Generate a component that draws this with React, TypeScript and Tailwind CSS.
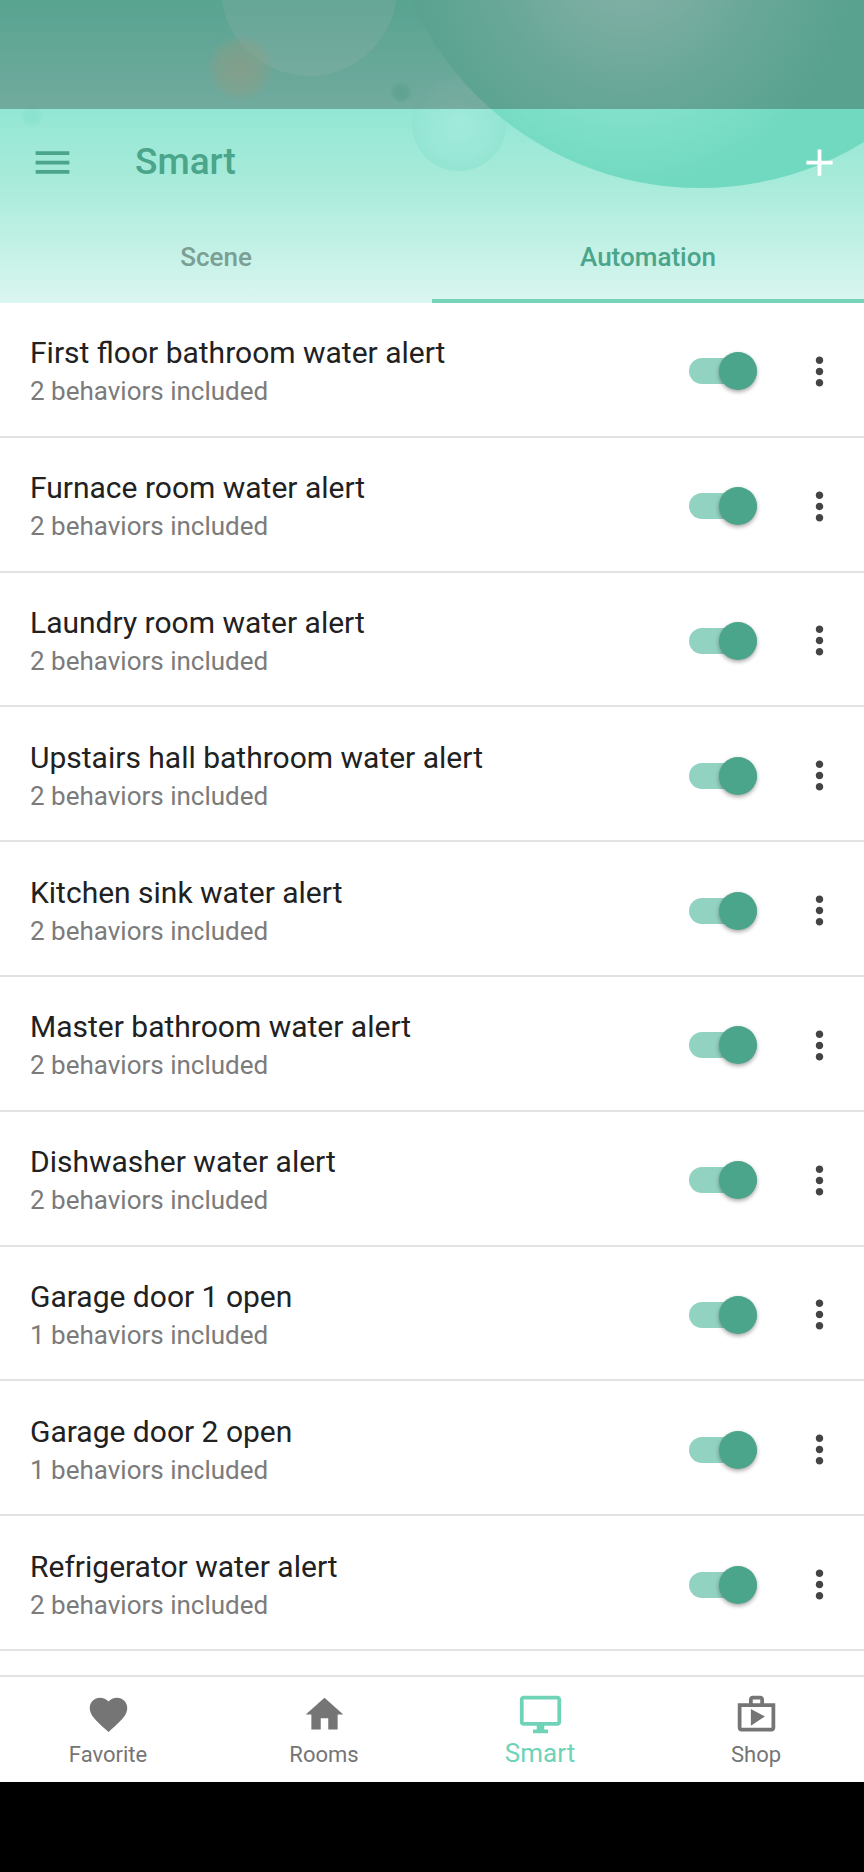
import { useState } from "react";
import {
  MdAdd,
  MdFavorite,
  MdHome,
  MdMenu,
  MdMoreVert,
  MdOutlineDesktopWindows,
  MdOutlineShop,
} from "react-icons/md";

interface Automation {
  name: string;
  behaviors: number;
}

const AUTOMATIONS: Automation[] = [
  { name: "First floor bathroom water alert", behaviors: 2 },
  { name: "Furnace room water alert", behaviors: 2 },
  { name: "Laundry room water alert", behaviors: 2 },
  { name: "Upstairs hall bathroom water alert", behaviors: 2 },
  { name: "Kitchen sink water alert", behaviors: 2 },
  { name: "Master bathroom water alert", behaviors: 2 },
  { name: "Dishwasher water alert", behaviors: 2 },
  { name: "Garage door 1 open", behaviors: 1 },
  { name: "Garage door 2 open", behaviors: 1 },
  { name: "Refrigerator water alert", behaviors: 2 },
];

const NAV_ITEMS = [
  { label: "Favorite", icon: MdFavorite },
  { label: "Rooms", icon: MdHome },
  { label: "Smart", icon: MdOutlineDesktopWindows },
  { label: "Shop", icon: MdOutlineShop },
];

function HeaderArt() {
  return (
    <svg
      className="absolute inset-0 h-full w-full"
      viewBox="0 0 864 303"
      preserveAspectRatio="xMidYMin slice"
      aria-hidden="true"
    >
      <defs>
        <linearGradient id="sky" x1="0" y1="0" x2="0" y2="1">
          <stop offset="0" stopColor="#6fdcc1" />
          <stop offset="0.36" stopColor="#93e6d4" />
          <stop offset="0.6" stopColor="#a8ebda" />
          <stop offset="1" stopColor="#daf6f0" />
        </linearGradient>
        <radialGradient id="planet" gradientUnits="userSpaceOnUse" cx="628" cy="-40" r="255">
          <stop offset="0" stopColor="#b4f0e2" />
          <stop offset="0.55" stopColor="#84e1cb" />
          <stop offset="0.9" stopColor="#70d9bf" />
          <stop offset="1" stopColor="#70d9bf" />
        </radialGradient>
        <radialGradient id="glow">
          <stop offset="0" stopColor="#c0cfae" stopOpacity="0.7" />
          <stop offset="0.7" stopColor="#c0cfae" stopOpacity="0.4" />
          <stop offset="1" stopColor="#c0cfae" stopOpacity="0" />
        </radialGradient>
        <radialGradient id="bubble">
          <stop offset="0" stopColor="#a4ebdd" />
          <stop offset="0.8" stopColor="#96e6d5" />
          <stop offset="1" stopColor="#90e3d1" />
        </radialGradient>
        <radialGradient id="dot">
          <stop offset="0" stopColor="#78dac1" />
          <stop offset="0.6" stopColor="#78dac1" stopOpacity="0.8" />
          <stop offset="1" stopColor="#78dac1" stopOpacity="0" />
        </radialGradient>
      </defs>
      <rect width="864" height="303" fill="url(#sky)" />
      <circle cx="309" cy="-12" r="88" fill="#ffffff" opacity="0.14" />
      <circle cx="240" cy="68" r="34" fill="url(#glow)" />
      <circle cx="401" cy="92" r="11" fill="url(#dot)" />
      <circle cx="32" cy="116" r="12" fill="url(#dot)" opacity="0.35" />
      <circle cx="459" cy="124" r="47" fill="url(#bubble)" opacity="0.8" />
      <circle cx="700" cy="-128" r="316" fill="url(#planet)" />
    </svg>
  );
}

function AutomationRow({ item }: { item: Automation }) {
  const [enabled, setEnabled] = useState(true);

  return (
    <li className="flex flex-1 items-center border-b-2 border-[#e2e2e2] pt-7 pb-6 pl-[30px] pr-[22px]">
      <div className="min-w-0 flex-1 pt-0.5">
        <h2 className="truncate text-3xl leading-[38px] text-[#212121]">{item.name}</h2>
        <p className="text-[26px] leading-[38px] text-[#7b7b7b]">{item.behaviors} behaviors included</p>
      </div>
      <input
        type="checkbox"
        role="switch"
        aria-label={item.name}
        checked={enabled}
        onChange={(e) => setEnabled(e.target.checked)}
        className="relative mr-10 h-[26px] w-[68px] shrink-0 cursor-pointer appearance-none rounded-full bg-gray-300 before:absolute before:-top-1.5 before:left-0 before:size-[38px] before:rounded-full before:bg-gray-50 before:shadow-[0_2px_4px_rgba(0,0,0,0.35)] before:content-[''] checked:bg-[#92d2c1] checked:before:left-[30px] checked:before:bg-[#4aa58b]"
      />
      <button type="button" aria-label={`More options for ${item.name}`} className="shrink-0 text-[#444444]">
        <MdMoreVert size={45} />
      </button>
    </li>
  );
}

export default function App() {
  const [tab, setTab] = useState("Automation");
  const [page, setPage] = useState("Smart");

  return (
    <div className="flex min-h-screen flex-col bg-white font-[Roboto,sans-serif]">
      {/* Header */}
      <header className="relative overflow-hidden">
        <HeaderArt />
        <div className="relative h-[109px] bg-[#262626]/31" />
        <div className="relative flex h-[106px] items-center pl-[30px] pr-[22px]">
          <button type="button" aria-label="Open menu" className="text-[#4aa58b]">
            <MdMenu size={45} />
          </button>
          <h1 className="ml-[60px] flex-1 text-[37px] font-medium text-[#4aa58b]">Smart</h1>
          <button type="button" aria-label="Add automation" className="text-white">
            <MdAdd size={45} />
          </button>
        </div>
        <div role="tablist" className="relative flex h-[88px]">
          {["Scene", "Automation"].map((name) => (
            <button
              key={name}
              type="button"
              role="tab"
              aria-selected={tab === name}
              onClick={() => setTab(name)}
              className={`flex-1 border-b-4 text-[26px] font-medium ${
                tab === name ? "border-[#75d3ba] text-[#4aa58b]" : "border-transparent text-[#7b9e95]"
              }`}
            >
              {name}
            </button>
          ))}
        </div>
      </header>

      {/* Automations */}
      <main className="flex flex-1 flex-col pb-6">
        <ul className="flex flex-1 flex-col">
          {AUTOMATIONS.map((item) => (
            <AutomationRow key={item.name} item={item} />
          ))}
        </ul>
      </main>

      {/* Bottom navigation */}
      <nav className="flex h-[107px] border-t-2 border-[#e2e2e2]">
        {NAV_ITEMS.map(({ label, icon: Icon }) => (
          <button
            key={label}
            type="button"
            onClick={() => setPage(label)}
            className={`flex flex-1 flex-col items-center pt-[15px] ${
              page === label ? "text-[26px] text-[#6fd3b8]" : "text-[22px] text-[#757575]"
            }`}
          >
            <Icon size={45} />
            <span className={page === label ? "leading-8" : "leading-9"}>{label}</span>
          </button>
        ))}
      </nav>
      <div className="h-[90px] bg-black" />
    </div>
  );
}
